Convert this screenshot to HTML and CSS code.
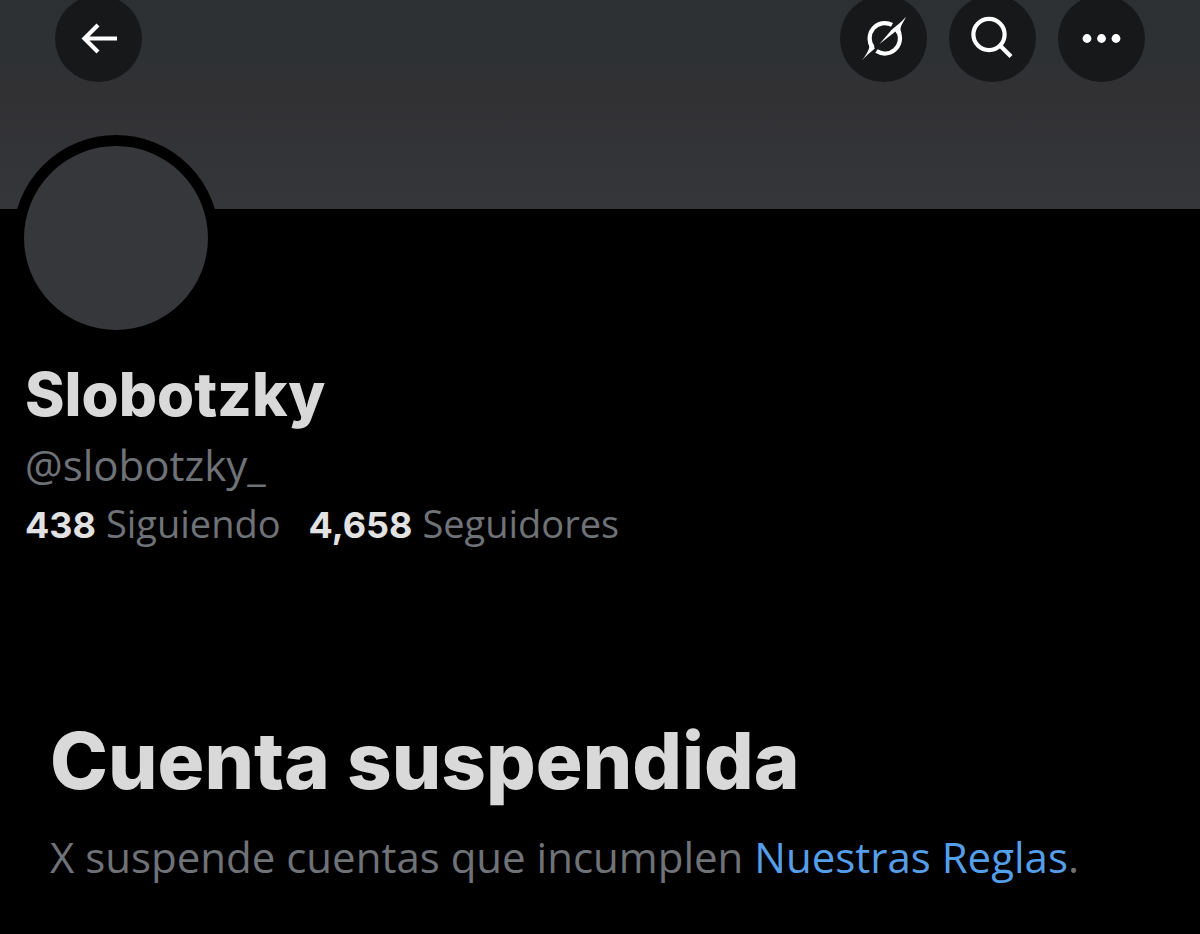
FILE: index.html
```html
<!DOCTYPE html>
<html lang="es">
<head>
  <meta charset="UTF-8" />
  <meta name="viewport" content="width=device-width, initial-scale=1.0" />
  <title>Slobotzky (@slobotzky_)</title>
  <link rel="stylesheet" href="styles.css">
</head>
<body>
  <header class="banner">
    <nav class="toolbar">
      <button class="round-btn back" type="button" aria-label="Atrás">
        <svg viewBox="0 0 87 87"><path d="M62 43.500H29M43 30L29.500 43.500 43 57" fill="none" stroke="#fff" stroke-width="4.200"/></svg>
      </button>
      <button class="round-btn" type="button" aria-label="Grok">
        <svg viewBox="0 0 87 87" fill="#fff">
          <path d="M52 29.900A15.200 15.200 0 0 0 32.800 52.600M36.500 56.100A15.200 15.200 0 0 0 58.500 36.800" fill="none" stroke="#fff" stroke-width="4.200"/>
          <path d="M28.200 48C29.500 51 29.500 52.500 28.800 54C27.500 57.500 25 61.500 22 65.200C26 61.200 30 57.500 34.800 53.500L33 49Z"/>
          <path d="M39.500 49L51.700 34.800C56.500 30.500 61.500 27 66 21.700C63.500 27 60.500 31 60.500 34C60.500 35.500 61 36.500 61.500 38L56.500 38.500L55.500 36.500Z"/>
        </svg>
      </button>
      <button class="round-btn" type="button" aria-label="Buscar">
        <svg viewBox="0 0 87 87" fill="none" stroke="#fff" stroke-width="4.200"><circle cx="40" cy="39.500" r="15.600"/><path d="M51 50.500L62 61.500"/></svg>
      </button>
      <button class="round-btn" type="button" aria-label="Más opciones">
        <svg viewBox="0 0 87 87" fill="#fff"><circle cx="29" cy="43.500" r="4.400"/><circle cx="43.500" cy="43.500" r="4.400"/><circle cx="58" cy="43.500" r="4.400"/></svg>
      </button>
    </nav>
  </header>

  <main>
    <!-- Profile -->
    <section class="profile">
      <div class="avatar"></div>
      <h1>Slobotzky</h1>
      <p class="handle">@slobotzky_</p>
      <div class="stats">
        <a href="#siguiendo"><strong>438</strong> Siguiendo</a>
        <a href="#seguidores"><strong>4,658</strong> Seguidores</a>
      </div>
    </section>

    <!-- Suspended notice -->
    <section class="notice">
      <h2>Cuenta suspendida</h2>
      <p>X suspende cuentas que incumplen <a href="#reglas">Nuestras Reglas</a>.</p>
    </section>
  </main>
</body>
</html>
```
FILE: styles.css
```css
* { box-sizing: border-box; }
body { margin: 0; background: #000; color: #d9d9d9; font-family: 'Open Sans', sans-serif; }
h1, h2, p { margin: 0; }
h1, h2 { font-family: Inter, sans-serif; font-weight: 800; }
a { color: inherit; text-decoration: none; }

.banner { height: 209px; overflow: hidden; background: linear-gradient(#2c3033 0, #2e3134 60px, #313134 85px, #353639 100%); }
.toolbar { display: flex; gap: 22px; padding: 0 55px; margin-top: -5px; }
.round-btn { width: 87px; height: 87px; padding: 0; border: none; border-radius: 50%; background: #17181a; cursor: pointer; }
.round-btn svg { display: block; width: 100%; height: 100%; }
.back { margin-right: auto; }

.profile { padding: 0 25px; }
.avatar { width: 206px; height: 206px; margin: -74px 0 0 -12px; border: 11px solid #000; border-radius: 50%; background: #36373b; }
h1 { margin-top: 12px; font-size: 60px; line-height: 82px; }
.handle { font-size: 42px; line-height: 60px; color: #6f7277; }
.stats { display: flex; gap: 28px; font-size: 38px; line-height: 56px; color: #6f7277; }
.stats strong { color: #e2e2e2; font-family: Inter, sans-serif; font-size: 36px; font-weight: 700; }

.notice { padding: 0 50px; margin-top: 152px; }
h2 { font-size: 78px; line-height: 112px; }
.notice p { margin-top: 10px; font-size: 42px; line-height: 60px; color: #6f7277; }
.notice a { color: #559ee9; }
```
